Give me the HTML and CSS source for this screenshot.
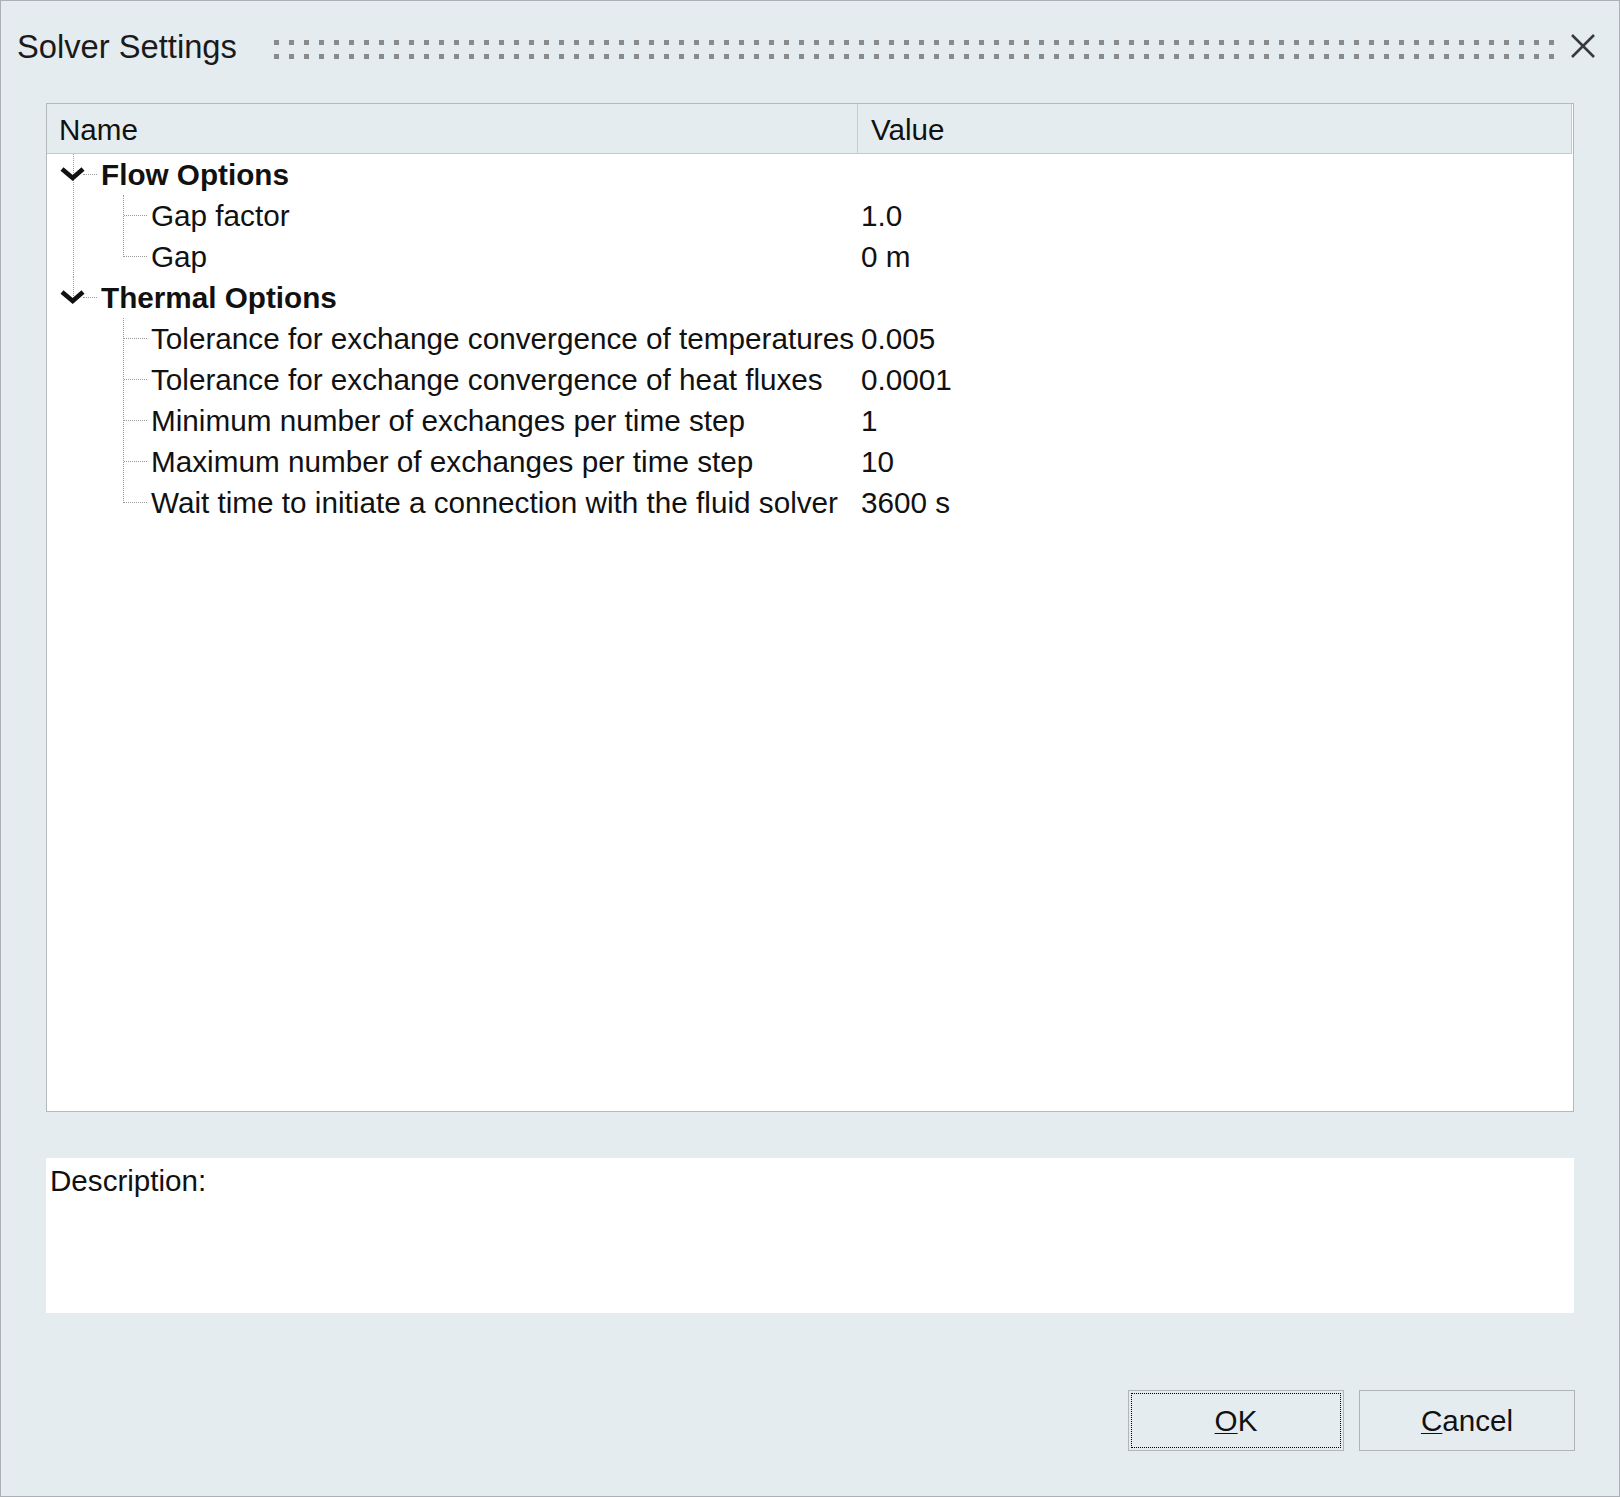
FILE: index.html
```html
<!DOCTYPE html>
<html lang="en">
<head>
<meta charset="utf-8">
<title>Solver Settings</title>
<link rel="stylesheet" href="styles.css">
</head>
<body>
<div class="window">
  <div class="titlebar">
    <div class="title">Solver Settings</div>
    <svg class="grip" width="1283" height="19" viewBox="0 0 1283 19">
      <defs>
        <pattern id="dots" width="15" height="14" patternUnits="userSpaceOnUse">
          <rect width="5" height="5" fill="#8a8a8a"/>
        </pattern>
      </defs>
      <rect width="1283" height="19" fill="url(#dots)"/>
    </svg>
    <svg class="close" width="26" height="26" viewBox="0 0 26 26">
      <path d="M2 2 L24 24 M24 2 L2 24" stroke="#3a3a3a" stroke-width="2.6" fill="none"/>
    </svg>
  </div>

  <div class="table">
    <div class="thead">
      <div class="th th-name">Name</div>
      <div class="th th-value">Value</div>
    </div>
    <div class="tbody">
      <div class="group">
        <div class="row parent">
          <div class="name">
            <svg class="twisty" width="25" height="16" viewBox="0 0 25 16"><path d="M2 3 L12.7 12 L23 3" stroke="#111" stroke-width="4.6" fill="none"/></svg>
            Flow Options
          </div>
          <div class="value"></div>
        </div>
        <div class="children">
          <div class="row child"><div class="name">Gap factor</div><div class="value">1.0</div></div>
          <div class="row child"><div class="name">Gap</div><div class="value">0 m</div></div>
        </div>
      </div>
      <div class="group last">
        <div class="row parent">
          <div class="name">
            <svg class="twisty" width="25" height="16" viewBox="0 0 25 16"><path d="M2 3 L12.7 12 L23 3" stroke="#111" stroke-width="4.6" fill="none"/></svg>
            Thermal Options
          </div>
          <div class="value"></div>
        </div>
        <div class="children">
          <div class="row child"><div class="name">Tolerance for exchange convergence of temperatures</div><div class="value">0.005</div></div>
          <div class="row child"><div class="name">Tolerance for exchange convergence of heat fluxes</div><div class="value">0.0001</div></div>
          <div class="row child"><div class="name">Minimum number of exchanges per time step</div><div class="value">1</div></div>
          <div class="row child"><div class="name">Maximum number of exchanges per time step</div><div class="value">10</div></div>
          <div class="row child"><div class="name">Wait time to initiate a connection with the fluid solver</div><div class="value">3600 s</div></div>
        </div>
      </div>
    </div>
  </div>

  <div class="description">Description:</div>

  <div class="buttons">
    <button class="btn btn-ok"><span class="u">O</span>K</button>
    <button class="btn"><span class="u">C</span>ancel</button>
  </div>
</div>
</body>
</html>
```

FILE: styles.css
```css
html, body {
  margin: 0;
  padding: 0;
  background: #e5ecf0;
}

body {
  font-family: "Liberation Sans", Arial, sans-serif;
  color: #111;
}

.window {
  width: 1620px;
  height: 1497px;
  box-sizing: border-box;
  border: 1px solid #aab0b5;
  background: #e5ecf0;
  display: flex;
  flex-direction: column;
}

/* Title bar */
.titlebar {
  height: 102px;
  display: flex;
  align-items: flex-start;
  padding-left: 16px;
  box-sizing: border-box;
  padding-top: 26px;
}

.title {
  width: 257px;
  font-size: 32.7px;
  line-height: 40px;
  color: #1a1a1a;
  white-space: nowrap;
}

.grip {
  display: block;
  margin-top: 13px;
}

.close {
  display: block;
  margin-left: 13px;
  margin-top: 6px;
}

/* Table */
.table {
  margin-left: 45px;
  width: 1528px;
  height: 1009px;
  box-sizing: border-box;
  border: 1px solid #b4b9bd;
  background: #ffffff;
  display: flex;
  flex-direction: column;
}

.thead {
  display: flex;
  height: 50px;
  box-sizing: border-box;
  background: #e5ecf0;
  border-bottom: 1px solid #c5cace;
  border-right: 1px solid #c5cace;
  margin-right: 1px;
  font-size: 29.6px;
  line-height: 49px;
}

.th {
  padding-top: 1px;
  box-sizing: border-box;
}

.th-name {
  width: 811px;
  padding-left: 12px;
  border-right: 1px solid #c8cdd1;
}

.th-value {
  padding-left: 13px;
}

.tbody {
  font-size: 29.7px;
}

.group {
  position: relative;
}

.group::before {
  content: "";
  position: absolute;
  left: 26px;
  top: 0;
  bottom: 0;
  border-left: 1px dotted #9a9a9a;
}

.group.last::before {
  bottom: auto;
  height: 21px;
}

.row {
  display: grid;
  grid-template-columns: 811px 1fr;
  height: 41px;
  line-height: 41px;
  white-space: nowrap;
}

.row .name {
  position: relative;
  box-sizing: border-box;
  overflow: visible;
}

.parent .name {
  padding-left: 54px;
  font-weight: bold;
}

.parent .name::after {
  content: "";
  position: absolute;
  left: 36px;
  top: 20px;
  width: 14px;
  border-top: 1px dotted #9a9a9a;
}

.twisty {
  position: absolute;
  left: 13px;
  top: 12px;
  z-index: 1;
}

.children {
  position: relative;
}

.children::before {
  content: "";
  position: absolute;
  left: 76px;
  top: 0;
  bottom: 20px;
  border-left: 1px dotted #9a9a9a;
}

.child .name {
  padding-left: 104px;
}

.child .name::after {
  content: "";
  position: absolute;
  left: 77px;
  top: 20px;
  width: 23px;
  border-top: 1px dotted #9a9a9a;
}

.row .value {
  padding-left: 3px;
}

/* Description */
.description {
  margin-top: 46px;
  margin-left: 45px;
  width: 1528px;
  height: 155px;
  box-sizing: border-box;
  background: #ffffff;
  padding-left: 4px;
  padding-top: 5px;
  font-size: 29.6px;
  line-height: 36px;
}

/* Buttons */
.buttons {
  display: flex;
  justify-content: flex-end;
  gap: 15px;
  margin-top: 77px;
  margin-right: 44px;
}

.btn {
  width: 216px;
  height: 61px;
  box-sizing: border-box;
  border: 1px solid #b0b5ba;
  background: #e5ecf0;
  font-family: "Liberation Sans", Arial, sans-serif;
  font-size: 29.6px;
  color: #111;
  padding: 0;
  margin: 0;
  border-radius: 0;
}

.btn-ok {
  outline: 1px dotted #000;
  outline-offset: -4px;
}

.u {
  text-decoration: underline;
  text-decoration-thickness: 1px;
  text-underline-offset: 2px;
}
```
